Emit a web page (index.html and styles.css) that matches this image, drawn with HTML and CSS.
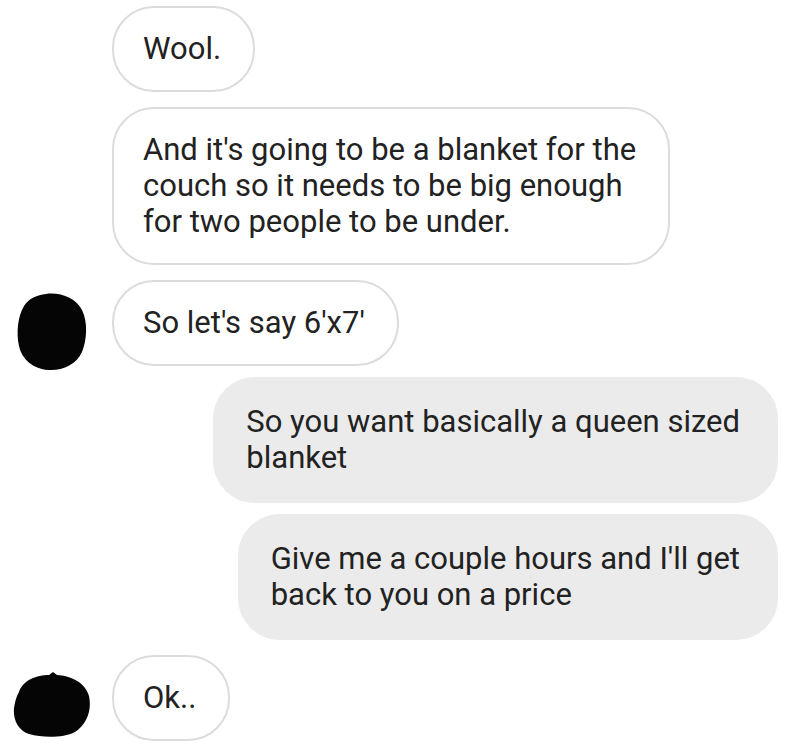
FILE: index.html
```html
<!DOCTYPE html>
<html lang="en">
<head>
    <meta charset="UTF-8">
    <meta name="viewport" content="width=device-width, initial-scale=1.0">
    <title>Chat</title>
    <link rel="stylesheet" href="styles.css">
</head>
<body>
    <div class="thread">
        <div class="row">
            <div class="avatar-slot"></div>
            <div class="bubble incoming">Wool.</div>
        </div>

        <div class="row gap-lg">
            <div class="avatar-slot"></div>
            <div class="bubble incoming">And it's going to be a blanket for the<br>couch so it needs to be big enough<br>for two people to be under.</div>
        </div>

        <div class="row gap-lg">
            <div class="avatar-slot">
                <svg class="avatar" width="72" height="80" viewBox="0 0 72 80">
                    <path d="M30 2 C44 0 60 6 66 18 C72 30 71 48 66 60 C60 73 46 79 32 78 C18 77 6 68 3 54 C0 40 2 24 8 14 C13 6 21 3 30 2 Z" fill="#050505"/>
                </svg>
            </div>
            <div class="bubble incoming">So let's say 6'x7'</div>
        </div>

        <div class="row outgoing-row gap-sm">
            <div class="bubble outgoing">So you want basically a queen sized<br>blanket</div>
        </div>

        <div class="row outgoing-row gap-sm">
            <div class="bubble outgoing">Give me a couple hours and I'll get<br>back to you on a price</div>
        </div>

        <div class="row gap-lg">
            <div class="avatar-slot">
                <svg class="avatar avatar-low" width="78" height="66" viewBox="0 0 78 66">
                    <path d="M6 20 C10 8 24 3 36 3 L40 0 L44 3 C58 4 72 10 76 24 C79 38 74 52 62 60 C50 66 30 66 16 62 C4 58 0 46 1 36 C2 30 3 25 6 20 Z" fill="#050505"/>
                </svg>
            </div>
            <div class="bubble incoming">Ok..</div>
        </div>
    </div>
</body>
</html>
```

FILE: styles.css
```css
body {
    font-family: Roboto, "Noto Sans", Arial, sans-serif;
    background-color: #ffffff;
    color: #222222;
    margin: 0;
    padding: 0;
}

.thread {
    display: flex;
    flex-direction: column;
    padding: 6px 22px 0 0;
}

.row {
    display: flex;
    align-items: flex-end;
}

.gap-lg {
    margin-top: 15px;
}

.gap-sm {
    margin-top: 11px;
}

.outgoing-row {
    justify-content: flex-end;
}

.avatar-slot {
    width: 112px;
    flex-shrink: 0;
    display: flex;
    justify-content: flex-start;
}

.avatar {
    display: block;
    margin-left: 16px;
    margin-bottom: -6px;
}

.avatar-low {
    margin-left: 13px;
    margin-bottom: 3px;
}

.bubble {
    font-size: 31px;
    line-height: 36px;
    white-space: nowrap;
    padding: 23px 32px 23px 29px;
    border-radius: 42px;
}

.incoming {
    background-color: #ffffff;
    border: 2px solid #dcdcdc;
}

.outgoing {
    background-color: #ebebeb;
    border: 2px solid #ebebeb;
    padding: 25px 36px 25px 31px;
}
```
